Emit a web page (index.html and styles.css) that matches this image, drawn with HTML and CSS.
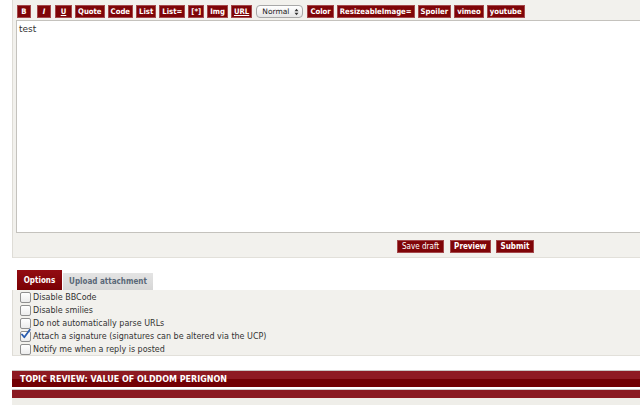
FILE: index.html
```html
<!DOCTYPE html>
<html>
<head>
<meta charset="utf-8">
<link rel="stylesheet" href="styles.css">
</head>
<body>
<div class="postbox">
  <div class="toolbar">
    <span class="btn b">B</span>
    <span class="btn i">I</span>
    <span class="btn u first-u">U</span>
    <span class="btn">Quote</span>
    <span class="btn">Code</span>
    <span class="btn">List</span>
    <span class="btn">List=</span>
    <span class="btn">[*]</span>
    <span class="btn">Img</span>
    <span class="btn u">URL</span>
    <span class="select">Normal <span class="arrows"><svg width="5" height="8" viewBox="0 0 5 8"><path d="M0.5 3.2 L2.5 0.8 L4.5 3.2 Z M0.5 4.8 L2.5 7.2 L4.5 4.8 Z" fill="#333"/></svg></span></span>
    <span class="btn">Color</span>
    <span class="btn">ResizeableImage=</span>
    <span class="btn">Spoiler</span>
    <span class="btn">vimeo</span>
    <span class="btn">youtube</span>
  </div>
  <div class="editor">test</div>
  <div class="submit-row">
    <span class="btn sbtn light">Save draft</span>
    <span class="btn sbtn">Preview</span>
    <span class="btn sbtn wide">Submit</span>
  </div>
</div>

<div class="tabs">
  <span class="tab active">Options</span>
  <span class="tab">Upload attachment</span>
</div>
<div class="options">
  <div class="opt"><span class="cb"></span>Disable BBCode</div>
  <div class="opt"><span class="cb"></span>Disable smilies</div>
  <div class="opt"><span class="cb"></span>Do not automatically parse URLs</div>
  <div class="opt"><span class="cb"><svg width="11" height="11" viewBox="0 0 11 11"><path d="M2 5.5 L4.3 8.3 L9.8 0.8" fill="none" stroke="#2a5db0" stroke-width="1.8" stroke-linecap="round" stroke-linejoin="round"/></svg></span>Attach a signature (signatures can be altered via the UCP)</div>
  <div class="opt"><span class="cb"></span>Notify me when a reply is posted</div>
</div>

<div class="review">
  <div class="review-head">Topic review: Value of Olddom Perignon</div>
  <div class="review-sep"></div>
  <div class="review-bar"></div>
  <div class="review-body"></div>
</div>
</body>
</html>
```

FILE: styles.css
```css
html, body {
  margin: 0;
  padding: 0;
  background: #ffffff;
  overflow: hidden;
}
body {
  font-family: "DejaVu Sans", Verdana, sans-serif;
  font-size: 8px;
  color: #333;
}
.postbox {
  margin-left: 12px;
  background: #f2f1ed;
  border-left: 1px solid #dedcd6;
  border-bottom: 1px solid #e2e0da;
  padding: 5px 0 5px 3px;
  box-sizing: border-box;
  height: 258px;
}
.toolbar {
  display: flex;
  align-items: center;
  gap: 3px;
  height: 13px;
  padding-left: 1px;
}
.btn {
  display: inline-flex;
  align-items: center;
  justify-content: center;
  height: 13px;
  box-sizing: border-box;
  padding: 0 2px;
  background: #7f0508;
  border: 1px solid #a4484b;
  color: #fff;
  font-family: "DejaVu Sans Condensed", "DejaVu Sans", sans-serif;
  font-stretch: condensed;
  font-weight: bold;
  font-size: 7.7px;
  line-height: 1;
}
.btn.b, .btn.i { width: 14px; padding: 0; }
.btn.i { font-style: italic; margin-left: 3px; }
.btn.u { text-decoration: underline; }
.btn.first-u { width: 17px; padding: 0; margin-left: 1px; }
.select {
  display: inline-flex;
  align-items: center;
  gap: 5px;
  height: 13px;
  box-sizing: border-box;
  padding: 0 3px 0 5px;
  border: 1px solid #a8a8a8;
  border-radius: 4px;
  background: linear-gradient(#ffffff, #e6e6e6);
  color: #222;
  font-size: 7.5px;
  margin: 0 1px;
}
.arrows { display: inline-flex; }
.editor {
  margin-top: 2px;
  height: 213px;
  box-sizing: border-box;
  background: #fff;
  border: 1px solid #c4c2bd;
  border-right: 0;
  padding: 3px 2px;
  font-size: 9px;
  color: #333;
}
.submit-row {
  display: flex;
  gap: 6px;
  padding: 7px 0 0 381px;
}
.sbtn { height: 13px; padding: 0 3px; font-size: 8px; }
.sbtn.light { font-weight: normal; padding: 0 4px; }
.sbtn.wide { padding: 0 4px; margin-left: -1px; }
.tabs {
  display: flex;
  align-items: flex-end;
  margin: 12px 0 0 17px;
  height: 20px;
  gap: 1px;
}
.tab {
  display: inline-flex;
  align-items: center;
  justify-content: center;
  height: 17px;
  width: 90px;
  background: linear-gradient(#e4e4e4, #d6d6d6);
  color: #5a6878;
  font-family: "DejaVu Sans Condensed", "DejaVu Sans", sans-serif;
  font-stretch: condensed;
  font-weight: bold;
  font-size: 8px;
}
.tab.active {
  height: 20px;
  width: 45px;
  background: linear-gradient(#930c12, #7a0004);
  color: #fff;
}
.options {
  margin-left: 12px;
  background: #f2f1ed;
  border-left: 1px solid #dedcd6;
  border-bottom: 1px solid #e2e0da;
  padding: 1px 0 1px 7px;
  height: 66px;
  box-sizing: border-box;
}
.opt {
  display: flex;
  align-items: center;
  height: 13px;
  color: #333;
  font-size: 8px;
}
.cb {
  display: inline-flex;
  width: 9px;
  height: 9px;
  border: 1px solid #8f8f8f;
  border-radius: 2px;
  background: linear-gradient(#ffffff, #ececec);
  margin-right: 2px;
  position: relative;
}
.cb svg { position: absolute; left: -1px; top: -3px; }
.review {
  margin: 14px 0 0 12px;
}
.review-head {
  border-top: 1px solid #c9c6c3;
  height: 16px;
  background: linear-gradient(#8e1a22 0%, #8e1a22 50%, #720004 50%, #720004 100%);
  color: #fff;
  font-weight: bold;
  text-transform: uppercase;
  font-size: 8px;
  padding-left: 8px;
  display: flex;
  align-items: center;
}
.review-sep {
  height: 2px;
  background: #fff;
  border-bottom: 1px solid #cfcac8;
}
.review-bar {
  height: 8px;
  background: #8b1a22;
}
.review-body {
  height: 10px;
  background: #efeee9;
}
```
